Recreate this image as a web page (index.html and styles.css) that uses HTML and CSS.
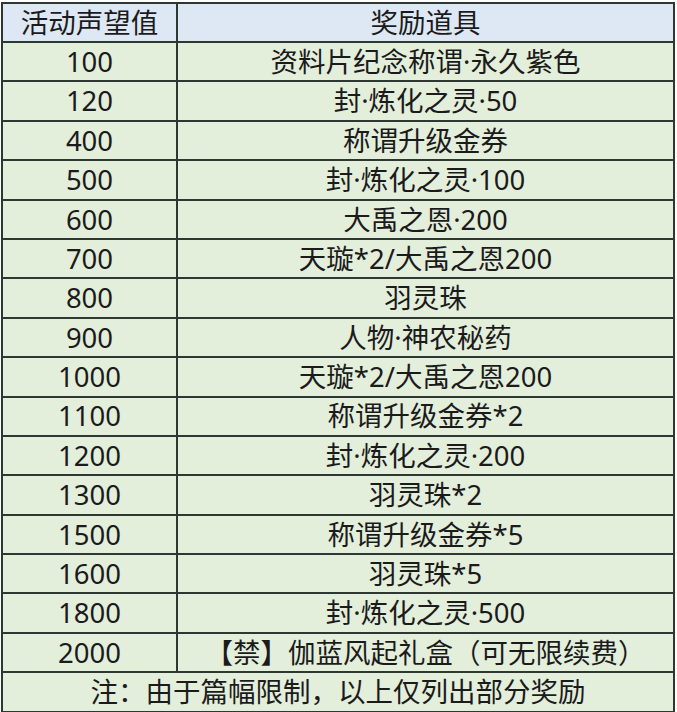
FILE: index.html
```html
<!DOCTYPE html>
<html lang="zh">
<head>
<meta charset="utf-8">
<link rel="stylesheet" href="styles.css">
</head>
<body>
<table class="reward-table">
  <thead>
    <tr class="head-row"><th class="col-rep">活动声望值</th><th class="col-item">奖励道具</th></tr>
  </thead>
  <tbody>
    <tr><td>100</td><td>资料片纪念称谓·永久紫色</td></tr>
    <tr><td>120</td><td>封·炼化之灵·50</td></tr>
    <tr><td>400</td><td>称谓升级金券</td></tr>
    <tr><td>500</td><td>封·炼化之灵·100</td></tr>
    <tr><td>600</td><td>大禹之恩·200</td></tr>
    <tr><td>700</td><td>天璇*2/大禹之恩200</td></tr>
    <tr><td>800</td><td>羽灵珠</td></tr>
    <tr><td>900</td><td>人物·神农秘药</td></tr>
    <tr><td>1000</td><td>天璇*2/大禹之恩200</td></tr>
    <tr><td>1100</td><td>称谓升级金券*2</td></tr>
    <tr><td>1200</td><td>封·炼化之灵·200</td></tr>
    <tr><td>1300</td><td>羽灵珠*2</td></tr>
    <tr><td>1500</td><td>称谓升级金券*5</td></tr>
    <tr><td>1600</td><td>羽灵珠*5</td></tr>
    <tr><td>1800</td><td>封·炼化之灵·500</td></tr>
    <tr><td>2000</td><td>【禁】伽蓝风起礼盒（可无限续费）</td></tr>
    <tr class="note-row"><td colspan="2">注：由于篇幅限制，以上仅列出部分奖励</td></tr>
  </tbody>
</table>
</body>
</html>
```
FILE: styles.css
```css
html, body {
  margin: 0;
  padding: 0;
  background: #ffffff;
}
body {
  padding: 2px 0 0 1px;
  font-family: "Noto Sans", "Noto Sans CJK SC", sans-serif;
  color: #1b1b1b;
}
.reward-table {
  border-collapse: collapse;
  width: 674px;
  table-layout: fixed;
  font-size: 27.5px;
  line-height: 1;
}
.reward-table th,
.reward-table td {
  border: 2px solid #2e3832;
  text-align: center;
  vertical-align: middle;
  padding: 0;
  font-weight: normal;
  background: #e3eedb;
}
.reward-table tr { height: 39.4px; }
.reward-table .head-row { height: 39px; }
.reward-table th { background: #dde8f4; }
.col-rep { width: 173px; }
.note-row { height: 38.5px; }
```
